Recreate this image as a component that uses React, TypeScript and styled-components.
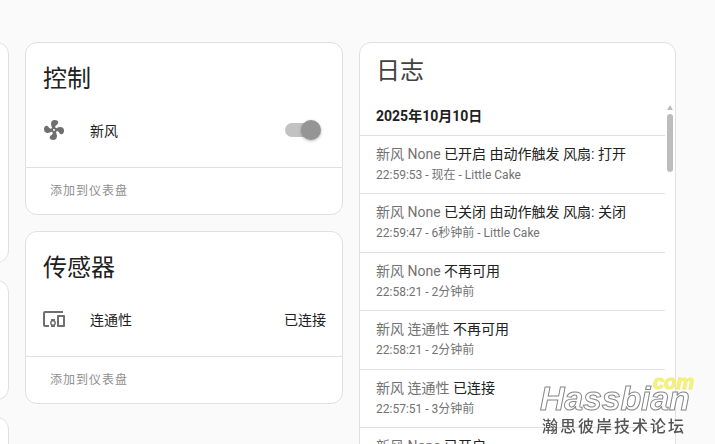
import styled, { createGlobalStyle } from 'styled-components';

const FONT = `Roboto, "Noto Sans CJK SC", sans-serif`;

const GlobalStyle = createGlobalStyle`
  html, body {
    margin: 0;
    height: 444px;
    overflow: hidden;
    background: #fafafa;
    font-family: ${FONT};
    color: #212121;
  }
`;

const Page = styled.div`
  display: grid;
  grid-template-columns: 318px 318px 317px;
  column-gap: 16px;
  align-items: start;
  margin-left: -309px;
  padding-top: 42px;
`;

const Column = styled.div<{ $gap: number }>`
  display: flex;
  flex-direction: column;
  gap: ${p => p.$gap}px;
`;

const Card = styled.section<{ $height?: number }>`
  box-sizing: border-box;
  background: #fff;
  border: 1px solid #e0e0e0;
  border-radius: 12px;
  ${p => (p.$height ? `height: ${p.$height}px;` : '')}
`;

const CardTitle = styled.h2`
  margin: 0;
  padding: 18px 17px 0;
  font-size: 24px;
  font-weight: 400;
  line-height: 36px;
`;

const Row = styled.div`
  display: flex;
  align-items: center;
  height: 24px;
  margin-top: 21px;
  padding: 0 16px;
  font-size: 14px;
`;

const RowIcon = styled.svg`
  flex: none;
  width: 24px;
  height: 24px;
  fill: #6f6f6f;
`;

const RowName = styled.span`
  flex: 1;
  margin-left: 24px;
`;

const Switch = styled.span`
  position: relative;
  width: 32px;
  height: 14px;
  margin-right: 9px;
  border-radius: 7px;
  background: #c2c2c2;
`;

const SwitchThumb = styled.span`
  position: absolute;
  top: -3px;
  right: -4px;
  width: 20px;
  height: 20px;
  border-radius: 50%;
  background: #959595;
  box-shadow: 0 1px 3px rgba(0, 0, 0, 0.3);
`;

const CardFooter = styled.div`
  margin-top: 25px;
  padding: 14px 24px 14px;
  border-top: 1px solid #e0e0e0;
  font-size: 12px;
  line-height: 18px;
  letter-spacing: 1px;
  color: #8f8f8f;
`;

const LogCard = styled(Card)`
  position: relative;
  height: 440px;
`;

const LogTitle = styled.h2`
  margin: 0;
  padding: 10px 16px 0;
  font-size: 24px;
  font-weight: 400;
  line-height: 36px;
  color: #424242;
`;

const LogList = styled.div`
  margin: 14px 10px 0 0;
`;

const LogDate = styled.div`
  box-sizing: border-box;
  height: 33.1px;
  padding: 5px 16px 0;
  border-bottom: 1px solid #e0e0e0;
  font-size: 14px;
  font-weight: 700;
  line-height: 17px;
`;

const LogEntry = styled.div`
  box-sizing: border-box;
  height: 58.4px;
  padding: 8px 16px 0;
  border-bottom: 1px solid #e0e0e0;
`;

const LogMessage = styled.div`
  font-size: 14px;
  line-height: 21px;
`;

const EntityName = styled.span`
  color: #727272;
`;

const LogMeta = styled.div`
  font-size: 12px;
  line-height: 20px;
  color: #727272;
`;

const ScrollRail = styled.div`
  position: absolute;
  top: 62px;
  right: 2px;
  display: flex;
  flex-direction: column;
  gap: 4px;
  width: 6px;
`;

const ScrollArrow = styled.span`
  width: 0;
  height: 0;
  border: solid transparent;
  border-width: 0 3px 5px;
  border-bottom-color: #bdbdbd;
`;

const ScrollThumb = styled.span`
  height: 58px;
  border-radius: 3px;
  background: #bdbdbd;
`;

const Watermark = styled.div`
  position: fixed;
  left: 540px;
  top: 374px;
  width: 156px;
  height: 66px;
`;

const WatermarkDomain = styled.span`
  position: absolute;
  right: 2px;
  top: -4px;
  font: italic 700 20px/24px "Liberation Sans", sans-serif;
  color: #f6f27e;
  -webkit-text-stroke: 1px #f1ec78;
`;

const WatermarkName = styled.span`
  position: absolute;
  left: 0;
  top: 6px;
  font: italic 700 34px/36px "Liberation Sans", sans-serif;
  letter-spacing: -0.2px;
  color: #fff;
  -webkit-text-stroke: 1px #858585;
`;

const WatermarkSlogan = styled.span`
  position: absolute;
  left: 2px;
  top: 43px;
  font-size: 16px;
  font-weight: 500;
  line-height: 20px;
  letter-spacing: 2px;
  white-space: nowrap;
  color: #555;
`;

const FAN =
  'M12,11A1,1 0 0,0 11,12A1,1 0 0,0 12,13A1,1 0 0,0 13,12A1,1 0 0,0 12,11M12.5,2C17,2 17.11,5.57 14.75,6.75C13.76,7.24 13.32,8.29 13.13,9.22C13.61,9.42 14.03,9.73 14.35,10.13C18.05,8.13 22.03,8.92 22.03,12.5C22.03,17 18.46,17.1 17.28,14.73C16.78,13.74 15.72,13.3 14.79,13.11C14.59,13.59 14.28,14 13.88,14.34C15.87,18.03 15.08,22 11.5,22C7,22 6.91,18.42 9.27,17.24C10.25,16.75 10.69,15.71 10.89,14.79C10.4,14.59 9.97,14.27 9.65,13.87C5.96,15.85 2,15.07 2,11.5C2,7 5.56,6.89 6.74,9.26C7.24,10.25 8.29,10.68 9.22,10.87C9.41,10.39 9.73,9.97 10.14,9.65C8.15,5.96 8.94,2 12.5,2Z';

const DEVICES =
  'M3 6H21V4H3C1.9 4 1 4.9 1 6V18C1 19.1 1.9 20 3 20H7V18H3V6M13 12H9V13.78C8.39 14.33 8 15.11 8 16C8 16.89 8.39 17.67 9 18.22V20H13V18.22C13.61 17.67 14 16.88 14 16S13.61 14.33 13 13.78V12M11 17.5C10.17 17.5 9.5 16.83 9.5 16S10.17 14.5 11 14.5 12.5 15.17 12.5 16 11.83 17.5 11 17.5M22 8H16C15.5 8 15 8.5 15 9V19C15 19.5 15.5 20 16 20H22C22.5 20 23 19.5 23 19V9C23 8.5 22.5 8 22 8M21 18H17V10H21V18Z';

const entries = [
  { name: '新风 None', action: '已开启 由动作触发 风扇: 打开', meta: '22:59:53 - 现在 - Little Cake' },
  { name: '新风 None', action: '已关闭 由动作触发 风扇: 关闭', meta: '22:59:47 - 6秒钟前 - Little Cake' },
  { name: '新风 None', action: '不再可用', meta: '22:58:21 - 2分钟前' },
  { name: '新风 连通性', action: '不再可用', meta: '22:58:21 - 2分钟前' },
  { name: '新风 连通性', action: '已连接', meta: '22:57:51 - 3分钟前' },
  { name: '新风 None', action: '已开启', meta: '22:57:51 - 3分钟前' },
];

const App = () => (
  <>
    <GlobalStyle />
    <Page>
      <Column $gap={17}>
        <Card $height={221} />
        <Card $height={120} />
        <Card $height={120} />
      </Column>

      <Column $gap={16}>
        <Card>
          <CardTitle>控制</CardTitle>
          <Row>
            <RowIcon viewBox="0 0 24 24"><path d={FAN} /></RowIcon>
            <RowName>新风</RowName>
            <Switch><SwitchThumb /></Switch>
          </Row>
          <CardFooter>添加到仪表盘</CardFooter>
        </Card>
        <Card>
          <CardTitle>传感器</CardTitle>
          <Row>
            <RowIcon viewBox="0 0 24 24"><path d={DEVICES} /></RowIcon>
            <RowName>连通性</RowName>
            <span>已连接</span>
          </Row>
          <CardFooter>添加到仪表盘</CardFooter>
        </Card>
      </Column>

      <LogCard>
        <LogTitle>日志</LogTitle>
        <LogList>
          <LogDate>2025年10月10日</LogDate>
          {entries.map(entry => (
            <LogEntry key={entry.meta + entry.name}>
              <LogMessage><EntityName>{entry.name}</EntityName> {entry.action}</LogMessage>
              <LogMeta>{entry.meta}</LogMeta>
            </LogEntry>
          ))}
        </LogList>
        <ScrollRail>
          <ScrollArrow />
          <ScrollThumb />
        </ScrollRail>
      </LogCard>
    </Page>

    <Watermark>
      <WatermarkDomain>com</WatermarkDomain>
      <WatermarkName>Hassbian</WatermarkName>
      <WatermarkSlogan>瀚思彼岸技术论坛</WatermarkSlogan>
    </Watermark>
  </>
);

export default App;
